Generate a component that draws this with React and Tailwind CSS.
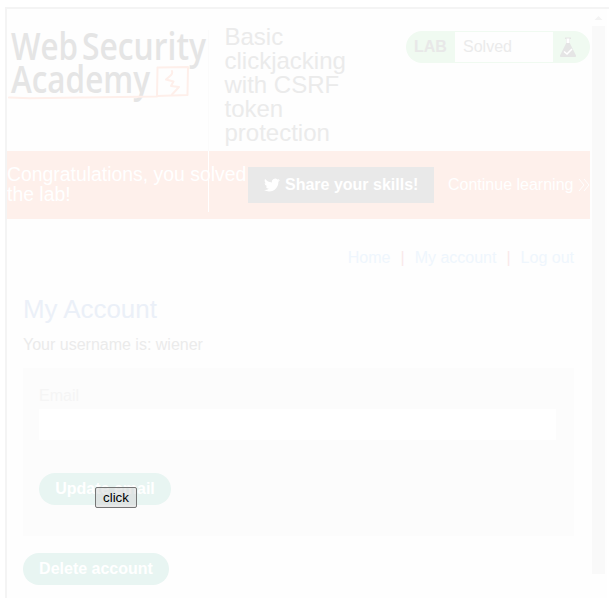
import React from "react";

function Logo() {
  return (
    <svg width="201" height="84" viewBox="7 26 201 84" className="block shrink-0 overflow-visible">
      <g fill="#e5e5e5" fontFamily="'Open Sans', sans-serif" fontWeight="600" fontSize="38.5">
        <text x="11" y="60" textLength="67" lengthAdjust="spacingAndGlyphs">Web</text>
        <text x="82" y="60" textLength="124" lengthAdjust="spacingAndGlyphs">Security</text>
        <text x="11" y="92.500" textLength="139" lengthAdjust="spacingAndGlyphs">Academy</text>
      </g>
      <g fill="none" stroke="#feefea" strokeWidth="2" strokeLinejoin="round" strokeLinecap="round">
        <path d="M9 97.500 L30 98.300 L157 96.500 L157.500 67.500 L188 67 L187.500 95 L157 96" />
        <path d="M172 71 Q173 74 169.500 76.500 L166 79.500 L173.500 81.500 L171 86 L179 87 L172 94.500" />
      </g>
    </svg>
  );
}

function LabStatus() {
  return (
    <div className="flex h-8 w-[184px] overflow-hidden rounded-full bg-[#f0faf1] text-base leading-8">
      <div className="w-[49px] pl-2 font-bold text-[#e8e8e8]">LAB</div>
      <div className="my-px w-[98px] bg-[#fefefe] pl-2 leading-[30px] text-[#ebebeb]">Solved</div>
      <svg width="37" height="32" viewBox="553 31 37 32">
        <path d="M565 37.500h6v1.500h-1v4.500l6 12q.5 1.500-1 1.500h-14q-1.500 0-1-1.500l6-12V39h-1z" fill="#e5e5e5" />
        <path d="M566.500 38.500h3v4.500h-3z" fill="#fff" />
        <path d="M564 51.500l3 2.500 5-5" fill="none" stroke="#fff" strokeWidth="1.6" />
      </svg>
    </div>
  );
}

function Header() {
  return (
    <header className="flex h-[142px] pt-[17px]">
      <Logo />
      <div className="relative w-px shrink-0">
        <div className="absolute left-0 top-[4px] z-10 h-[121px] w-px bg-[#fbfbfb]" />
        <div className="absolute left-0 top-[125px] z-10 h-[61px] w-px bg-white" />
      </div>
      <h1 className="ml-[15.5px] mt-[-1px] w-[140px] text-2xl leading-6 text-[#ebebeb]">
        Basic clickjacking with CSRF token protection
      </h1>
      <div className="ml-auto mt-[5px]">
        <LabStatus />
      </div>
    </header>
  );
}

function Banner() {
  return (
    <section className="flex h-[68px] overflow-hidden bg-[#fef0eb] text-white">
      <p className="w-[241px] shrink-0 whitespace-nowrap pt-[13px] text-[19.4px] leading-5">
        Congratulations, you solved
        <br />
        the lab!
      </p>
      <div className="mt-4 flex h-9 w-[186px] shrink-0 items-center bg-[#e9e9e9] pl-4">
        <svg width="16" height="16" viewBox="0 0 24 24" fill="white">
          <path d="M23.953 4.570a10 10 0 01-2.825.775 4.958 4.958 0 002.163-2.723c-.951.555-2.005.959-3.127 1.184a4.920 4.920 0 00-8.384 4.482C7.690 8.095 4.067 6.130 1.640 3.162a4.822 4.822 0 00-.666 2.475c0 1.710.87 3.213 2.188 4.096a4.904 4.904 0 01-2.228-.616v.06a4.923 4.923 0 003.946 4.827 4.996 4.996 0 01-2.212.085 4.936 4.936 0 004.604 3.417 9.867 9.867 0 01-6.102 2.105c-.39 0-.779-.023-1.170-.067a13.995 13.995 0 007.557 2.209c9.053 0 13.998-7.496 13.998-13.985 0-.21 0-.42-.015-.63A9.935 9.935 0 0024 4.590z" />
        </svg>
        <span className="ml-[5px] whitespace-nowrap font-bold">Share your skills!</span>
      </div>
      <div className="ml-[14px] flex h-[68px] items-center whitespace-nowrap">
        Continue learning
        <svg className="ml-[5px]" width="12" height="14" viewBox="0 0 12 14" fill="none" stroke="white" strokeWidth="1">
          <path d="M1 1l5 6-5 6M6 1l5 6-5 6" />
        </svg>
      </div>
    </section>
  );
}

function AccountPage() {
  return (
    <main className="px-4 text-base">
      <nav className="flex h-[76px] items-center justify-end pt-0.5 text-[#eff6fd]">
        <span>Home</span>
        <span className="mx-[10px] text-[#fae9ea]">|</span>
        <span>My account</span>
        <span className="mx-[10px] text-[#fae9ea]">|</span>
        <span>Log out</span>
      </nav>
      <h2 className="text-[25.9px] leading-7 text-[#ebf0f8]">My Account</h2>
      <p className="mt-[10px] leading-6 text-[#ebebeb]">Your username is: wiener</p>
      <form className="mt-[11px] h-[168px] bg-[#fcfcfc] px-4 pt-4">
        <label className="block h-[25px] leading-6 text-[#f5f5f5]">Email</label>
        <div className="h-[31px] w-[517px] bg-white" />
        <div className="mt-[33px] h-8 w-[132px] rounded-full bg-[#e8f5f2] text-center font-bold leading-8 text-white">
          Update email
        </div>
      </form>
      <div className="mt-[17px] h-8 w-[146px] rounded-full bg-[#e8f5f2] text-center font-bold leading-8 text-white">
        Delete account
      </div>
    </main>
  );
}

function Scrollbar() {
  return (
    <div className="flex w-[17px] shrink-0 flex-col items-center bg-[#fefefe]">
      <svg width="17" height="17" viewBox="0 0 17 17">
        <path d="M4.500 11l4-4 4 4z" fill="#f3f3f3" />
      </svg>
      <div className="h-[548px] w-[13px] bg-[#f9f9f9]" />
    </div>
  );
}

export default function App() {
  return (
    <div className="relative h-[598px] w-[609px] overflow-hidden bg-white pl-[5px] pt-[7px] font-['Liberation_Sans',Arial,sans-serif]">
      <div className="flex h-[591px] border-l-2 border-t-2 border-[#f4f4f4]">
        <div className="w-[583px] shrink-0 bg-[#fefefe]">
          <Header />
          <Banner />
          <AccountPage />
        </div>
        <Scrollbar />
      </div>
      <button className="absolute left-[95px] top-[487px] h-[21px] w-[42px] rounded-[2px] border border-[#767676] bg-[#d4d4d4]/50 text-[13.33px] leading-[19px] text-black">
        click
      </button>
    </div>
  );
}
